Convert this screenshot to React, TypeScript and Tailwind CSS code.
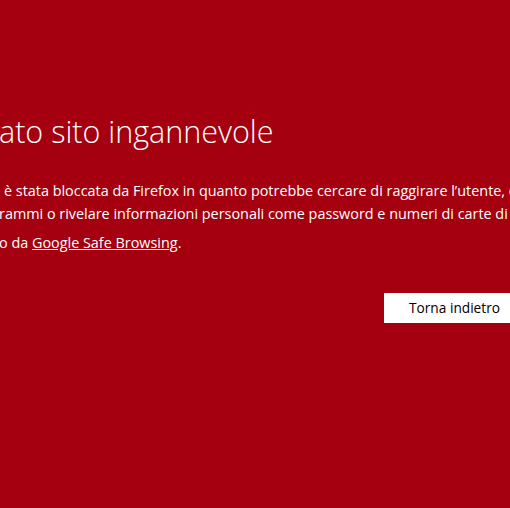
import React from "react";

export default function App() {
  return (
    <div
      className="w-[510px] h-[508px] overflow-hidden bg-[#a4000f] text-white"
      style={{ fontFamily: '"Open Sans", "Noto Sans", sans-serif' }}
    >
      <div className="pt-[111px] pl-0">
        <h1 className="whitespace-nowrap text-[30.5px] leading-[40px] font-light -ml-[1px]">
          ato sito ingannevole
        </h1>
        <div className="mt-[28px] text-[14.4px] leading-[23px] whitespace-nowrap">
          <p className="pl-[4px]">
            è stata bloccata da Firefox in quanto potrebbe cercare di raggirare l’utente, convincendolo
          </p>
          <p className="-ml-[1px]">
            rammi o rivelare informazioni personali come password e numeri di carte di credito.
          </p>
          <p className="mt-[6px] -ml-[1px]">
            o da <a className="underline">Google Safe Browsing</a>.
          </p>
        </div>
        <div className="mt-[39px] flex">
          <button className="ml-[384px] h-[30px] w-[160px] shrink-0 bg-white pl-[25px] text-left text-[13.7px] text-black">
            Torna indietro
          </button>
        </div>
      </div>
    </div>
  );
}
